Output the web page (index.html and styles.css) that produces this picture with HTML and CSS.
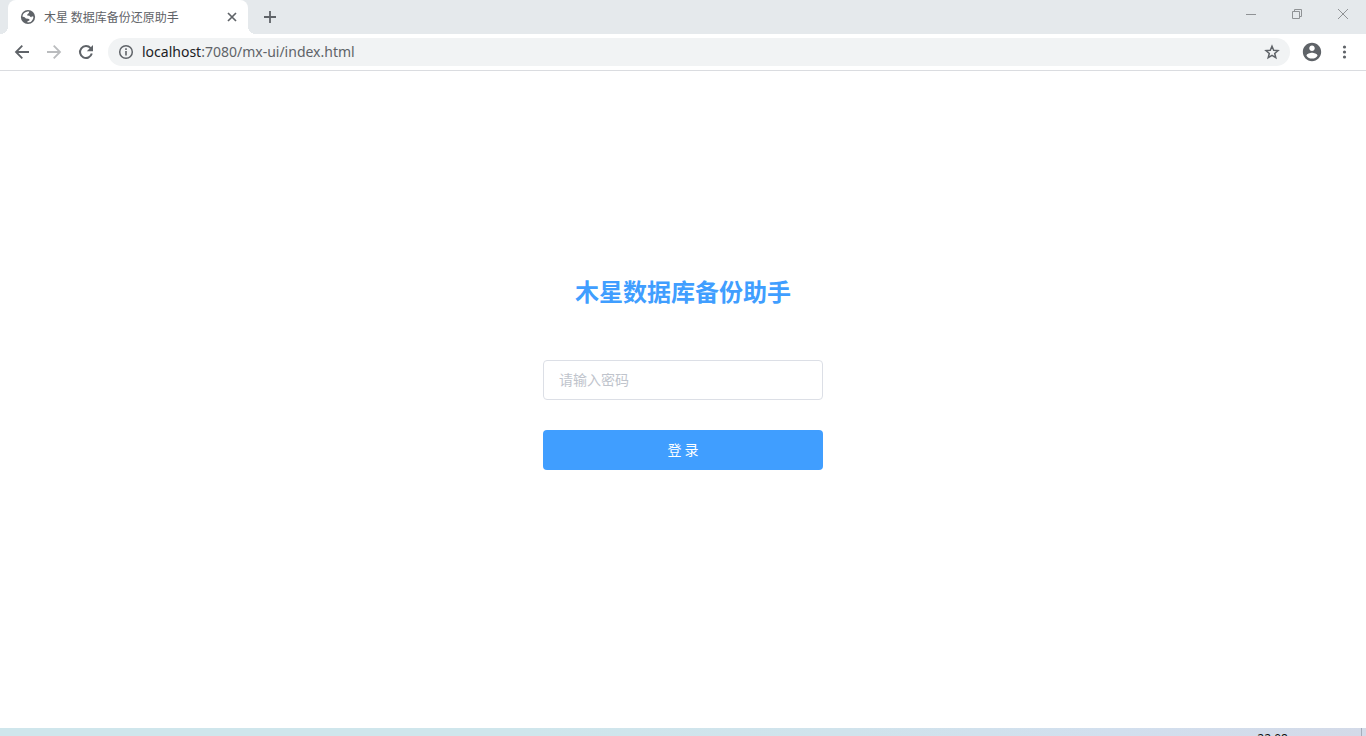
FILE: index.html
```html
<!DOCTYPE html>
<html lang="zh-CN">
<head>
<meta charset="utf-8">
<title>木星 数据库备份还原助手</title>
<link rel="stylesheet" href="styles.css">
</head>
<body>
<header class="tabstrip">
  <div class="tab">
    <svg class="tab-icon" viewBox="0 0 16 16" width="16" height="16" aria-hidden="true">
      <circle cx="8" cy="8" r="7.1" fill="#5f6368"/>
      <path d="M7.6 2.4L9.2 2.6 8.9 4.1 7.4 5.2 7.2 6.6 9.4 6.7 10.6 8 11.5 8.3 11.8 7.2 13.5 7.7Q13.4 10.1 11.7 11.9L10.6 13 7.6 13.6 7.4 12.2 9.4 11.6 9.6 10.4 8.3 9.7 5.9 9.4 4.7 8.2 2.4 7.6Q2.7 3.4 7.6 2.4Z" fill="#fff"/>
    </svg>
    <span class="tab-title">木星 数据库备份还原助手</span>
    <button class="icon-button tab-close" type="button" aria-label="关闭标签页">
      <svg viewBox="0 0 16 16" width="16" height="16"><path d="M4 4L12 12M12 4L4 12" stroke="#5f6368" stroke-width="1.7"/></svg>
    </button>
  </div>
  <button class="icon-button new-tab" type="button" aria-label="新标签页">
    <svg viewBox="0 0 16 16" width="16" height="16"><path d="M8 2V14M2 8H14" stroke="#5f6368" stroke-width="1.800"/></svg>
  </button>
  <div class="window-controls">
    <button class="icon-button" type="button" aria-label="最小化">
      <svg viewBox="0 0 12 12" width="12" height="12"><path d="M1 6.5H11" stroke="#8f9295"/></svg>
    </button>
    <button class="icon-button" type="button" aria-label="还原">
      <svg viewBox="0 0 12 12" width="12" height="12" fill="none" stroke="#8f9295"><path d="M1.5 3.5H8.5V10.5H1.5ZM3.5 3.5V1.5H10.5V8.5H8.5"/></svg>
    </button>
    <button class="icon-button" type="button" aria-label="关闭">
      <svg viewBox="0 0 12 12" width="12" height="12"><path d="M1 1L11 11M11 1L1 11" stroke="#8f9295"/></svg>
    </button>
  </div>
</header>
<nav class="toolbar">
  <button class="icon-button" type="button" aria-label="后退">
    <svg viewBox="0 0 16 16" width="16" height="16" fill="none" stroke="#5f6368" stroke-width="1.800"><path d="M15 8H2.5M8.3 1.7L2 8L8.3 14.3"/></svg>
  </button>
  <button class="icon-button" type="button" aria-label="前进">
    <svg viewBox="0 0 16 16" width="16" height="16" fill="none" stroke="#babcbe" stroke-width="1.800"><path d="M1 8H13.5M7.7 1.7L14 8L7.7 14.3"/></svg>
  </button>
  <button class="icon-button" type="button" aria-label="重新加载">
    <svg viewBox="0 0 16 16" width="16" height="16"><path d="M12.6 4.1A6 6 0 1 0 13.8 9.6" fill="none" stroke="#5f6368" stroke-width="2"/><path d="M15 1V7.2H8.8Z" fill="#5f6368"/></svg>
  </button>
  <div class="address-bar">
    <svg class="info-icon" viewBox="0 0 16 16" width="16" height="16" aria-hidden="true"><circle cx="8" cy="8" r="6.3" fill="none" stroke="#5f6368" stroke-width="1.5"/><path d="M8 7V11.5M8 4.3V5.9" stroke="#5f6368" stroke-width="1.6"/></svg>
    <a class="url" href="#"><span class="url-host">localhost</span>:7080/mx-ui/index.html</a>
    <button class="icon-button" type="button" aria-label="添加书签">
      <svg viewBox="0 0 16 16" width="16" height="16"><path d="M8 2.2L9.7 6.2L14 6.5L10.7 9.4L11.8 13.7L8 11.4L4.2 13.7L5.3 9.4L2 6.5L6.3 6.2Z" fill="none" stroke="#5f6368" stroke-width="1.5"/></svg>
    </button>
  </div>
  <button class="icon-button profile" type="button" aria-label="用户">
    <svg viewBox="0 0 24 24" width="22" height="22"><path fill="#5f6368" d="M12 2C6.480 2 2 6.480 2 12s4.480 10 10 10 10-4.480 10-10S17.520 2 12 2zm0 3c1.660 0 3 1.340 3 3s-1.340 3-3 3-3-1.340-3-3 1.340-3 3-3zm0 14.200c-2.500 0-4.710-1.280-6-3.220.030-1.990 4-3.080 6-3.080 1.990 0 5.970 1.090 6 3.080-1.290 1.940-3.500 3.220-6 3.220z"/></svg>
  </button>
  <button class="icon-button" type="button" aria-label="菜单">
    <svg viewBox="0 0 16 16" width="16" height="16" fill="#5f6368"><circle cx="7.500" cy="3" r="1.600"/><circle cx="7.500" cy="8" r="1.600"/><circle cx="7.500" cy="13" r="1.600"/></svg>
  </button>
</nav>
<main class="page">
  <form class="login">
    <h1 class="login-title">木星数据库备份助手</h1>
    <input class="login-input" type="password" placeholder="请输入密码" aria-label="密码">
    <button class="login-button" type="button">登 录</button>
  </form>
</main>
<footer class="taskbar">
  <time class="clock">22:08</time>
</footer>
</body>
</html>
```
FILE: styles.css
```css
* {
  box-sizing: border-box;
}

body {
  display: flex;
  flex-direction: column;
  height: 100vh;
  margin: 0;
  overflow: hidden;
  background: #fff;
  font-family: "Noto Sans CJK SC", sans-serif;
}

svg {
  display: block;
}

.icon-button {
  display: flex;
  flex: none;
  padding: 0;
  border: 0;
  background: none;
}

.tabstrip {
  display: flex;
  flex: none;
  align-items: center;
  height: 34px;
  padding-left: 8px;
  background: #e5e9ec;
}

.tab {
  position: relative;
  display: flex;
  align-items: center;
  width: 240px;
  height: 34px;
  padding: 0 8px 0 12px;
  border-radius: 8px 8px 0 0;
  background: #fff;
}

.tab::before,
.tab::after {
  position: absolute;
  bottom: 0;
  width: 8px;
  height: 8px;
  content: "";
}

.tab::before {
  right: 100%;
  background: radial-gradient(circle at 0 0, transparent 8px, #fff 8px);
}

.tab::after {
  left: 100%;
  background: radial-gradient(circle at 100% 0, transparent 8px, #fff 8px);
}

.tab-icon {
  flex: none;
}

.tab-title {
  flex: 1;
  margin-left: 8px;
  overflow: hidden;
  color: #5f6368;
  font-size: 12px;
  line-height: 20px;
  white-space: nowrap;
}

.new-tab {
  margin-left: 14px;
}

.window-controls {
  display: flex;
  align-self: flex-start;
  gap: 34px;
  margin-left: auto;
  padding: 8px 17px 0 0;
}

.toolbar {
  display: flex;
  flex: none;
  align-items: center;
  gap: 16px;
  height: 37px;
  padding: 0 13px 1px 14px;
  border-bottom: 1px solid #dadce0;
}

.address-bar {
  display: flex;
  flex: 1;
  align-items: center;
  gap: 8px;
  height: 28px;
  margin-left: -2px;
  padding: 0 10px;
  border-radius: 14px;
  background: #f1f3f4;
}

.info-icon {
  flex: none;
}

.url {
  flex: 1;
  color: #5f6368;
  font-family: "Noto Sans", sans-serif;
  font-size: 14px;
  line-height: 28px;
  text-decoration: none;
}

.url-host {
  color: #202124;
}

.profile {
  margin: 0 -2px 0 -5px;
}

.page {
  display: flex;
  flex: 1;
  justify-content: center;
  padding-top: 200px;
}

.login {
  display: flex;
  flex-direction: column;
  width: 280px;
}

.login-title {
  margin: 0 0 49px;
  color: #409eff;
  font-size: 24px;
  font-weight: 700;
  line-height: 40px;
  text-align: center;
}

.login-input {
  width: 100%;
  height: 40px;
  margin-bottom: 30px;
  padding: 0 15px 2px;
  border: 1px solid #dcdfe6;
  border-radius: 4px;
  background: #fff;
  color: #606266;
  font-family: inherit;
  font-size: 14px;
}

.login-input::placeholder {
  color: #c0c4cc;
}

.login-button {
  height: 40px;
  padding: 0 0 2px;
  border: 0;
  border-radius: 4px;
  background: #409eff;
  color: #fff;
  font-family: inherit;
  font-size: 14px;
}

.taskbar {
  display: flex;
  flex: none;
  justify-content: flex-end;
  height: 8px;
  padding-right: 4px;
  overflow: hidden;
  background: linear-gradient(90deg, #cfe6ec 0%, #cfe6ec 38%, #d0e3ec 62%, #d2dfee 82%, #d3dae8 100%);
}

.clock {
  height: 20px;
  padding: 4px 73px 0 0;
  border-right: 1px solid #a5adba;
  color: #111;
  font-family: "Noto Sans", sans-serif;
  font-size: 12px;
  line-height: 14px;
}
```
